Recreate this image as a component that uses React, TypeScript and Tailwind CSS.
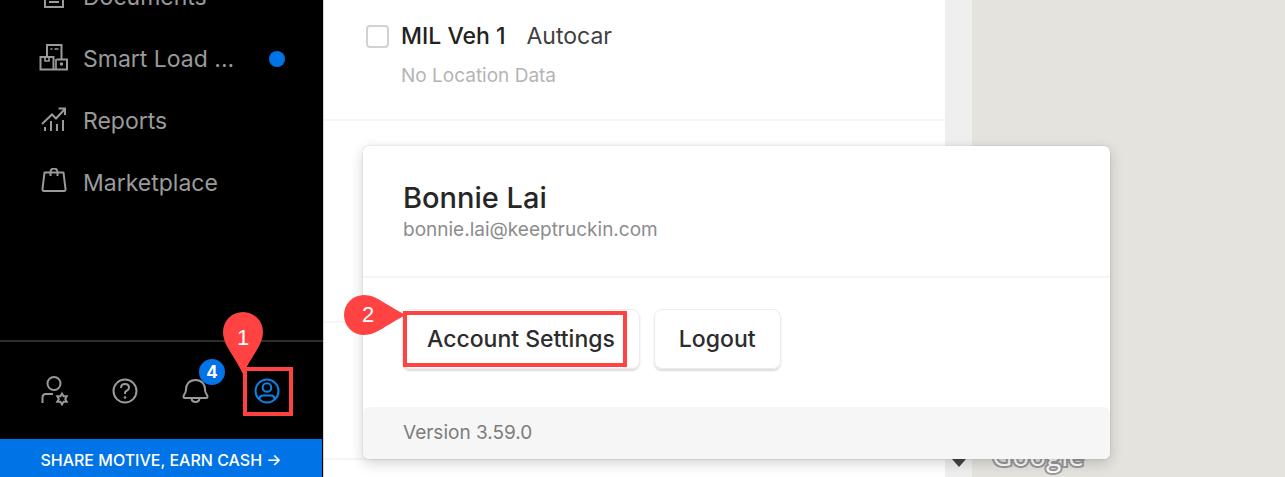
import type { ReactNode } from "react";

const icon = {
  fill: "none",
  stroke: "currentColor",
  strokeWidth: 2,
  "aria-hidden": true,
} as const;

const DocumentsIcon = () => (
  <svg {...icon} width="30" height="30" viewBox="0 0 30 30">
    <path d="M6 4h18v21H6z M10 14h10M10 20h10" />
  </svg>
);

const LoadIcon = () => (
  <svg {...icon} width="30" height="30" viewBox="0 0 30 30">
    <path d="M8 13V1h14.500v14" />
    <path d="M1.500 13h13v12.500h-13zM17.500 15.500h10.500v10h-13" />
    <path d="M6 13v4h4v-4M17 15v10.500M11.500 5h2M15.500 5h4" strokeWidth="1.700" />
    <circle cx="22.500" cy="20" r="1.700" fill="currentColor" stroke="none" />
  </svg>
);

const ReportsIcon = () => (
  <svg {...icon} width="30" height="30" viewBox="0 0 30 30">
    <path d="M3 18l10-9.500 4 4L26 3M19.500 2.500H26V9" />
    <path d="M6 21v4M12 15v10M18 18v7M24 14V25" />
  </svg>
);

const MarketplaceIcon = () => (
  <svg {...icon} width="30" height="30" viewBox="0 0 30 30" strokeLinejoin="round">
    <path d="M5.500 4.500h19L26.500 21q.3 2-1.500 2H5q-1.800 0-1.500-2z" />
    <path d="M11.500 8V4a3.500 3.500 0 0 1 7 0v4" />
  </svg>
);

const AdminIcon = () => (
  <svg {...icon} width="32" height="32" viewBox="0 0 32 32">
    <circle cx="16" cy="8.500" r="6.500" />
    <path d="M4.500 28v-5.500Q4.500 19 8 19h7" />
    <path
      d="M24 18.500l1.600 2.700h3.200l-1.600 2.800 1.600 2.800h-3.200L24 29.500l-1.600-2.700h-3.200l1.600-2.800-1.600-2.800h3.200z"
      strokeWidth="1.900"
    />
  </svg>
);

const HelpIcon = () => (
  <svg {...icon} width="32" height="32" viewBox="0 0 32 32">
    <circle cx="16" cy="16" r="11.500" />
    <path d="M12 13q0-4 4-4t4 3.500q0 2-2 3t-2 2.500v1" />
    <circle cx="16" cy="22.500" r="1.300" fill="currentColor" stroke="none" />
  </svg>
);

const BellIcon = () => (
  <svg {...icon} width="32" height="32" viewBox="0 0 32 32" strokeLinejoin="round">
    <path d="M15.500 5C9 5 6 9.500 6 14.500c0 4-2.500 5-2.500 7 0 1 .5 1.500 1.500 1.500h21c1 0 1.500-.5 1.500-1.500 0-2-2.500-3-2.500-7C25 9.500 22 5 15.500 5z" />
    <path d="M11.500 23.500q.5 3.500 4 3.500t4-3.500" />
  </svg>
);

const ProfileIcon = () => (
  <svg {...icon} width="32" height="32" viewBox="0 0 32 32">
    <circle cx="16" cy="16" r="11.500" />
    <circle cx="16" cy="12.500" r="4.300" />
    <path d="M8.500 24q0-3.500 3.500-3.500h8q3.500 0 3.500 3.500" />
  </svg>
);

const navItems = [
  { label: "Documents", Icon: DocumentsIcon },
  { label: "Smart Load ...", Icon: LoadIcon, isNew: true },
  { label: "Reports", Icon: ReportsIcon },
  { label: "Marketplace", Icon: MarketplaceIcon },
];

function FooterButton({ label, children }: { label: string; children: ReactNode }) {
  return (
    <button type="button" aria-label={label} className="relative size-8 text-[#9a9a9a]">
      {children}
    </button>
  );
}

function Sidebar() {
  return (
    <aside className="flex w-[324px] shrink-0 flex-col border-r border-neutral-300 bg-black">
      <nav className="flex min-h-0 flex-1 flex-col justify-end overflow-hidden pb-[126px]">
        {navItems.map(({ label, Icon, isNew }) => (
          <a key={label} href="#" className="flex h-[62px] shrink-0 items-center gap-3.5 pr-[38px] pl-[39px] text-[#9a9a9a]">
            <Icon />
            <span className="text-[23px] leading-8">{label}</span>
            {isNew && <span className="ml-auto size-4 rounded-full bg-[#0073e6]" />}
          </a>
        ))}
      </nav>

      <div className="flex h-[99px] shrink-0 items-center justify-between border-t-2 border-[#2c2c2c] pr-10 pl-[38px]">
        <FooterButton label="Admin"><AdminIcon /></FooterButton>
        <FooterButton label="Help"><HelpIcon /></FooterButton>
        <FooterButton label="Notifications">
          <BellIcon />
          <span className="absolute -top-4 left-[19px] flex size-[26px] items-center justify-center rounded-full bg-[#0073e6] text-[17px] leading-6 font-bold text-white">
            4
          </span>
        </FooterButton>
        <FooterButton label="Profile">
          <span className="text-[#0a84e6]"><ProfileIcon /></span>
          <span className="pointer-events-none absolute -top-2 -left-2 h-[49px] w-[50px] border-4 border-[#ff4343]" />
          <span className="pointer-events-none absolute -top-[63px] -left-7 h-[62px] w-10 text-white">
            <svg width="40" height="62" viewBox="0 0 40 62" aria-hidden="true">
              <path d="M20 0a20 20 0 0 1 20 20C40 33 29 43 20 62 11 43 0 33 0 20A20 20 0 0 1 20 0z" fill="#ff4343" />
            </svg>
            <span className="absolute inset-x-0 top-2.5 text-center text-[22px] leading-8 font-[Liberation_Sans]">1</span>
          </span>
        </FooterButton>
      </div>

      <a href="#" className="mr-px flex h-[38px] shrink-0 items-center justify-center bg-[#0073e6] pt-1 text-base font-medium text-white">
        SHARE MOTIVE, EARN CASH →
      </a>
    </aside>
  );
}

function VehicleList() {
  return (
    <main className="min-w-0 flex-1 overflow-hidden bg-white">
      <div className="flex h-[121px] gap-3 border-b-2 border-[#f5f5f5] pt-[18px] pl-[42px]">
        <input
          id="vehicle-1"
          type="checkbox"
          className="mt-[7px] size-[23px] shrink-0 appearance-none rounded border-2 border-[#d2d2d2] bg-white"
        />
        <div>
          <label htmlFor="vehicle-1" className="flex gap-[21px] text-[23px] leading-9 text-[#404040]">
            <span className="font-medium text-[#222]">MIL Veh 1</span>
            <span>Autocar</span>
          </label>
          <p className="mt-2.5 text-[19px] leading-6 text-[#b4b4b4]">No Location Data</p>
        </div>
      </div>
      <div className="h-[202px] border-b-2 border-[#f5f5f5]" />
      <div className="h-[137px] border-b-2 border-[#f5f5f5]" />
    </main>
  );
}

function AccountMenu() {
  return (
    <section className="absolute bottom-[18px] left-[363px] w-[747px] rounded-md bg-white shadow-[0_4px_14px_rgba(0,0,0,0.18),0_0_2px_rgba(0,0,0,0.16)]">
      <header className="border-b-2 border-[#f5f5f5] px-10 pt-8 pb-[34px]">
        <h2 className="text-[29px] leading-10 font-medium text-[#262626]">Bonnie Lai</h2>
        <p className="text-[19px] leading-6 text-[#8c8c8c]">bonnie.lai@keeptruckin.com</p>
      </header>

      <div className="flex gap-3.5 px-[39px] pt-[31px] pb-[38px]">
        <button type="button" className="relative h-[60px] rounded-lg border border-[#ececec] px-6 text-[23px] font-medium text-[#2c2c2c] shadow-[0_2px_2px_rgba(0,0,0,0.14)]">
          Account Settings
          <span className="pointer-events-none absolute top-px left-0 h-14 w-56 border-4 border-[#ff4343]" />
          <span className="pointer-events-none absolute -top-[15px] -left-[59px] h-10 w-[62px] font-normal text-white">
            <svg width="62" height="40" viewBox="0 0 62 40" aria-hidden="true">
              <path d="M20 0C33 0 43 11 62 20 43 29 33 40 20 40A20 20 0 0 1 20 0z" fill="#ff4343" />
            </svg>
            <span className="absolute top-1 left-0 w-12 text-center text-[22px] leading-8 font-[Liberation_Sans]">2</span>
          </span>
        </button>
        <button type="button" className="h-[60px] rounded-lg border border-[#ececec] px-6 text-[23px] font-medium text-[#2c2c2c] shadow-[0_2px_2px_rgba(0,0,0,0.14)]">
          Logout
        </button>
      </div>

      <footer className="rounded-md bg-[#f6f6f6] px-10 py-3.5 text-[19px] leading-6 text-[#7c7c7c]">
        Version 3.59.0
      </footer>
    </section>
  );
}

export default function App() {
  return (
    <div className="relative flex h-screen overflow-hidden font-[Inter,sans-serif]">
      <Sidebar />
      <VehicleList />

      {/* List scrollbar */}
      <div className="flex w-[27px] shrink-0 flex-col items-center justify-end bg-[#efefef] pb-2.5">
        <svg width="14" height="8" viewBox="0 0 14 8" aria-hidden="true">
          <path d="M0 0h14L7 8z" fill="#444" />
        </svg>
      </div>

      {/* Map */}
      <div className="flex w-[313px] shrink-0 items-end bg-[#e4e3de] pb-1.5 pl-5">
        <span className="text-[28px] leading-8 font-medium text-white font-[Open_Sans] [paint-order:stroke] [-webkit-text-stroke:4px_#999]">
          Google
        </span>
      </div>

      <AccountMenu />
    </div>
  );
}
